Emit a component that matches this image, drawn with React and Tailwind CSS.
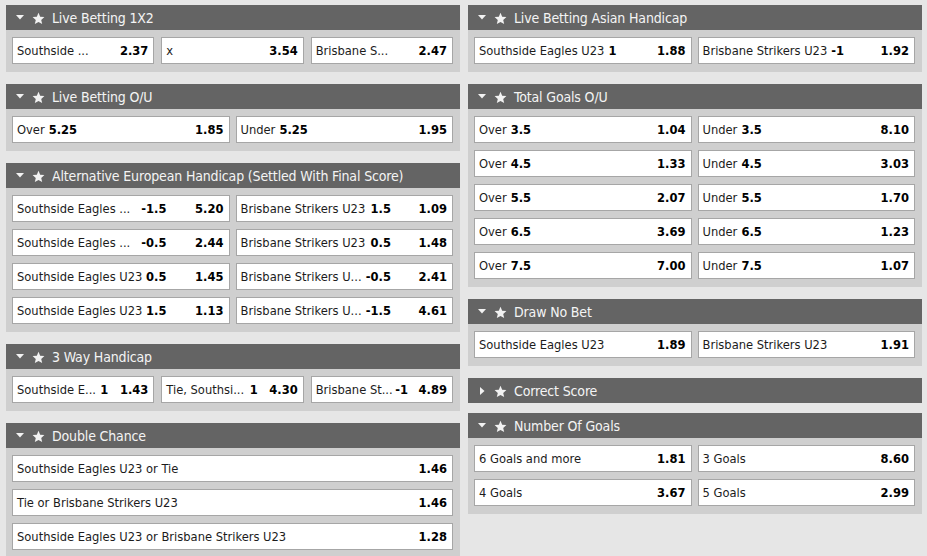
import React from "react";

const FONT = { fontFamily: '"DejaVu Sans Condensed", "DejaVu Sans", Tahoma, sans-serif' };

function Tri({ open = true }) {
  return open ? (
    <svg width="8" height="5" viewBox="0 0 8 5" className="shrink-0">
      <polygon points="0,0 8,0 4,4.5" fill="#f2f2f2" />
    </svg>
  ) : (
    <svg width="5" height="8" viewBox="0 0 5 8" className="shrink-0 ml-[2px] mr-[1px]">
      <polygon points="0,0 4.5,4 0,8" fill="#f2f2f2" />
    </svg>
  );
}

function Star() {
  return (
    <svg width="13" height="13" viewBox="0 0 24 24" className="shrink-0 mt-[2px]">
      <path
        d="M12 1.5l3.1 7.2 7.8.7-5.9 5.2 1.8 7.7L12 18.3l-6.8 4 1.8-7.7-5.9-5.2 7.8-.7z"
        fill="#f2f2f2"
      />
    </svg>
  );
}

function Header({ title, open = true }) {
  return (
    <div className="h-[25px] bg-[#646464] flex items-center pl-[10px] text-[#f4f4f4] text-[14px] tracking-[-0.15px] leading-none">
      <Tri open={open} />
      <span className="ml-[8px]">
        <Star />
      </span>
      <span className="ml-[7px] whitespace-nowrap">{title}</span>
    </div>
  );
}

function Cell({ label, hcap, odds, mode = "inline", oddsW }) {
  return (
    <div className="h-[27px] bg-white border border-[#a6a6a6] flex items-center pl-[4px] pr-[5px] text-[12.8px] text-[#1c1c1c] whitespace-nowrap overflow-hidden">
      {mode === "inline" ? (
        <>
          <span className="flex-1">
            {label}
            {hcap && <b className="text-black font-bold"> {hcap}</b>}
          </span>
          <b className="text-black font-bold">{odds}</b>
        </>
      ) : (
        <>
          <span className="flex-1 min-w-0">{label}</span>
          <b className="text-black font-bold text-right ml-[4px]">{hcap}</b>
          <b className={`text-black font-bold text-right ${oddsW}`}>{odds}</b>
        </>
      )}
    </div>
  );
}

function Panel({ title, cols = 2, children, className = "mb-[12px]", open = true }) {
  const grid =
    cols === 3
      ? "grid grid-cols-3 gap-x-[7px] gap-y-[7px]"
      : cols === 1
      ? "grid grid-cols-1 gap-y-[7px]"
      : "grid grid-cols-2 gap-x-[6px] gap-y-[7px]";
  return (
    <div className={className}>
      <Header title={title} open={open} />
      {open && (
        <div className="bg-[#cfcfcf] pt-[7px] pb-[8px] pl-[6px] pr-[7px]">
          <div className={grid}>{children}</div>
        </div>
      )}
    </div>
  );
}

export default function App() {
  return (
    <div className="w-[927px] h-[556px] overflow-hidden bg-[#e6e6e6] flex gap-[8px] pl-[6px] pt-[5px]" style={FONT}>
      <div className="w-[454px] flex flex-col">
        <Panel title="Live Betting 1X2" cols={3}>
          <Cell label="Southside ..." odds="2.37" />
          <Cell label="x" odds="3.54" />
          <Cell label="Brisbane S..." odds="2.47" />
        </Panel>
        <Panel title="Live Betting O/U">
          <Cell label="Over" hcap="5.25" odds="1.85" />
          <Cell label="Under" hcap="5.25" odds="1.95" />
        </Panel>
        <Panel title="Alternative European Handicap (Settled With Final Score)">
          <Cell mode="col" oddsW="w-[57px]" label="Southside Eagles ..." hcap="-1.5" odds="5.20" />
          <Cell mode="col" oddsW="w-[56px]" label="Brisbane Strikers U23" hcap="1.5" odds="1.09" />
          <Cell mode="col" oddsW="w-[57px]" label="Southside Eagles ..." hcap="-0.5" odds="2.44" />
          <Cell mode="col" oddsW="w-[56px]" label="Brisbane Strikers U23" hcap="0.5" odds="1.48" />
          <Cell mode="col" oddsW="w-[57px]" label="Southside Eagles U23" hcap="0.5" odds="1.45" />
          <Cell mode="col" oddsW="w-[56px]" label="Brisbane Strikers U..." hcap="-0.5" odds="2.41" />
          <Cell mode="col" oddsW="w-[57px]" label="Southside Eagles U23" hcap="1.5" odds="1.13" />
          <Cell mode="col" oddsW="w-[56px]" label="Brisbane Strikers U..." hcap="-1.5" odds="4.61" />
        </Panel>
        <Panel title="3 Way Handicap" cols={3}>
          <Cell mode="col" oddsW="w-[40px]" label="Southside E..." hcap="1" odds="1.43" />
          <Cell mode="col" oddsW="w-[40px]" label="Tie, Southsi..." hcap="1" odds="4.30" />
          <Cell mode="col" oddsW="w-[39px]" label="Brisbane St..." hcap="-1" odds="4.89" />
        </Panel>
        <Panel title="Double Chance" cols={1}>
          <Cell label="Southside Eagles U23 or Tie" odds="1.46" />
          <Cell label="Tie or Brisbane Strikers U23" odds="1.46" />
          <Cell label="Southside Eagles U23 or Brisbane Strikers U23" odds="1.28" />
        </Panel>
      </div>
      <div className="w-[454px] flex flex-col">
        <Panel title="Live Betting Asian Handicap">
          <Cell label="Southside Eagles U23" hcap="1" odds="1.88" />
          <Cell label="Brisbane Strikers U23" hcap="-1" odds="1.92" />
        </Panel>
        <Panel title="Total Goals O/U">
          <Cell label="Over" hcap="3.5" odds="1.04" />
          <Cell label="Under" hcap="3.5" odds="8.10" />
          <Cell label="Over" hcap="4.5" odds="1.33" />
          <Cell label="Under" hcap="4.5" odds="3.03" />
          <Cell label="Over" hcap="5.5" odds="2.07" />
          <Cell label="Under" hcap="5.5" odds="1.70" />
          <Cell label="Over" hcap="6.5" odds="3.69" />
          <Cell label="Under" hcap="6.5" odds="1.23" />
          <Cell label="Over" hcap="7.5" odds="7.00" />
          <Cell label="Under" hcap="7.5" odds="1.07" />
        </Panel>
        <Panel title="Draw No Bet">
          <Cell label="Southside Eagles U23" odds="1.89" />
          <Cell label="Brisbane Strikers U23" odds="1.91" />
        </Panel>
        <Panel title="Correct Score" open={false} className="mb-[10px]" />
        <Panel title="Number Of Goals">
          <Cell label="6 Goals and more" odds="1.81" />
          <Cell label="3 Goals" odds="8.60" />
          <Cell label="4 Goals" odds="3.67" />
          <Cell label="5 Goals" odds="2.99" />
        </Panel>
      </div>
    </div>
  );
}
